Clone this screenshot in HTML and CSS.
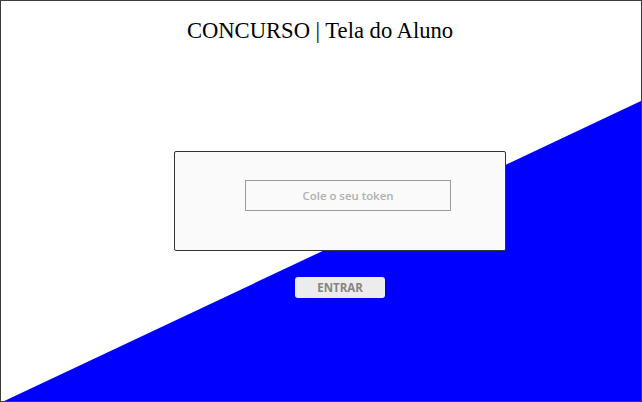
FILE: index.html
```html
<!DOCTYPE html>
<html lang="pt">
<head>
<meta charset="utf-8">
<title>CONCURSO | Tela do Aluno</title>
<link rel="stylesheet" href="styles.css">
</head>
<body>
<div class="page">
  <h1 class="title">CONCURSO | Tela do Aluno</h1>
  <div class="card">
    <input class="token" type="text" placeholder="Cole o seu token">
  </div>
  <button class="enter" type="button">ENTRAR</button>
</div>
</body>
</html>
```

FILE: styles.css
```css
html, body {
  margin: 0;
  padding: 0;
  height: 100%;
}
body {
  box-sizing: border-box;
  border: 1px solid #3c3c3c;
  background-color: #fff;
  background-image: url("data:image/svg+xml,%3Csvg xmlns='http://www.w3.org/2000/svg' viewBox='0 0 640 400' preserveAspectRatio='none'%3E%3Cpolygon points='0,401 640,100 640,400 0,400' fill='%230000ff'/%3E%3C/svg%3E");
  background-size: 100% 100%;
  background-repeat: no-repeat;
}
.page {
  display: flex;
  flex-direction: column;
  align-items: center;
}
.title {
  margin: 15px 0 0 -2px;
  font-family: "Liberation Serif", serif;
  font-weight: normal;
  font-size: 22.6px;
  line-height: 30px;
  color: #000;
}
.card {
  align-self: flex-start;
  margin: 105px 0 0 173px;
  width: 332px;
  height: 100px;
  box-sizing: border-box;
  border: 1px solid #333;
  border-radius: 2px;
  background: #fafafa;
  display: flex;
  padding: 28px 0 0 70px;
}
.token {
  width: 206px;
  height: 31px;
  box-sizing: border-box;
  border: 1px solid #9a9a9a;
  background: #fafafa;
  text-align: center;
  font-family: "Open Sans", sans-serif;
  font-weight: 600;
  font-size: 11.4px;
  padding: 0;
  margin: 0;
  outline: none;
}
.token::placeholder {
  color: #b0b0b0;
}
.enter {
  align-self: flex-start;
  margin: 26px 0 0 294px;
  width: 90px;
  height: 21px;
  border: none;
  border-radius: 3px;
  background: #ececec;
  color: #858585;
  font-family: "Open Sans", sans-serif;
  font-weight: 700;
  font-size: 11.5px;
  padding: 0;
}
```
